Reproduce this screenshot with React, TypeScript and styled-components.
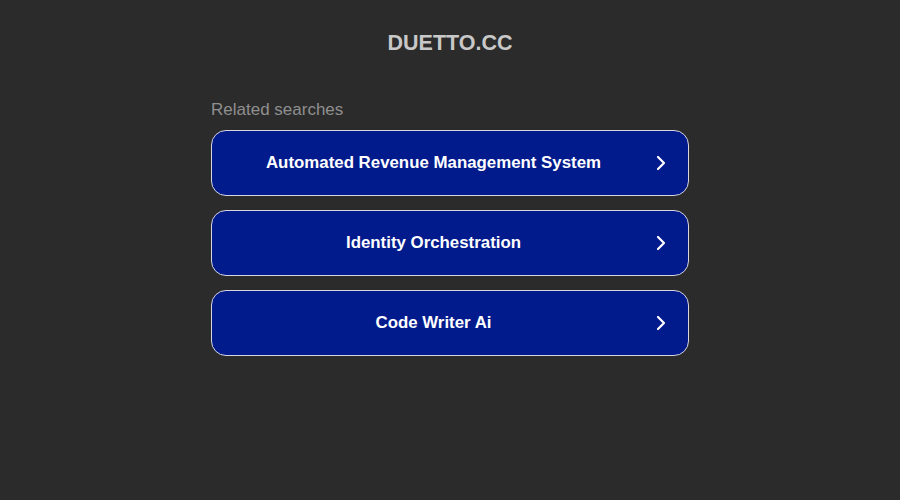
import * as React from "react";
import styled, { createGlobalStyle } from "styled-components";

const GlobalStyle = createGlobalStyle`
  html, body {
    margin: 0;
    padding: 0;
    background-color: #2b2b2b;
    font-family: "Liberation Sans", Arial, sans-serif;
  }
`;

const Page = styled.div`
  min-height: 500px;
  display: flex;
  flex-direction: column;
  align-items: center;
`;

const Title = styled.h1`
  margin: 31px 0 0;
  font-size: 21.5px;
  line-height: 24px;
  font-weight: 700;
  color: #c8c8c8;
`;

const Results = styled.div`
  width: 478px;
  margin-top: 45px;
  display: flex;
  flex-direction: column;
`;

const Label = styled.div`
  font-size: 17px;
  line-height: 20px;
  color: #8f8f8f;
  margin-bottom: 10px;
`;

const List = styled.div`
  display: flex;
  flex-direction: column;
  gap: 14px;
`;

const SearchLink = styled.a`
  box-sizing: border-box;
  height: 66px;
  display: flex;
  align-items: center;
  padding: 0 20px 0 16px;
  background-color: #011a8c;
  border: 1px solid #d6d6e0;
  border-radius: 15px;
  text-decoration: none;
  color: #ffffff;
  cursor: pointer;

  span {
    flex: 1;
    text-align: center;
    font-size: 16.85px;
    font-weight: 700;
  }

  svg {
    flex: none;
    margin-left: 15px;
  }
`;

const Chevron = () => (
  <svg width="14" height="16" viewBox="0 0 14 16" fill="none">
    <path
      d="M4 2 L10 8 L4 14"
      stroke="#ffffff"
      strokeWidth="2.2"
      strokeLinecap="round"
      strokeLinejoin="round"
    />
  </svg>
);

const searches = [
  "Automated Revenue Management System",
  "Identity Orchestration",
  "Code Writer Ai",
];

export default function App() {
  return (
    <Page>
      <GlobalStyle />
      <Title>DUETTO.CC</Title>
      <Results>
        <Label>Related searches</Label>
        <List>
          {searches.map((s) => (
            <SearchLink key={s}>
              <span>{s}</span>
              <Chevron />
            </SearchLink>
          ))}
        </List>
      </Results>
    </Page>
  );
}
